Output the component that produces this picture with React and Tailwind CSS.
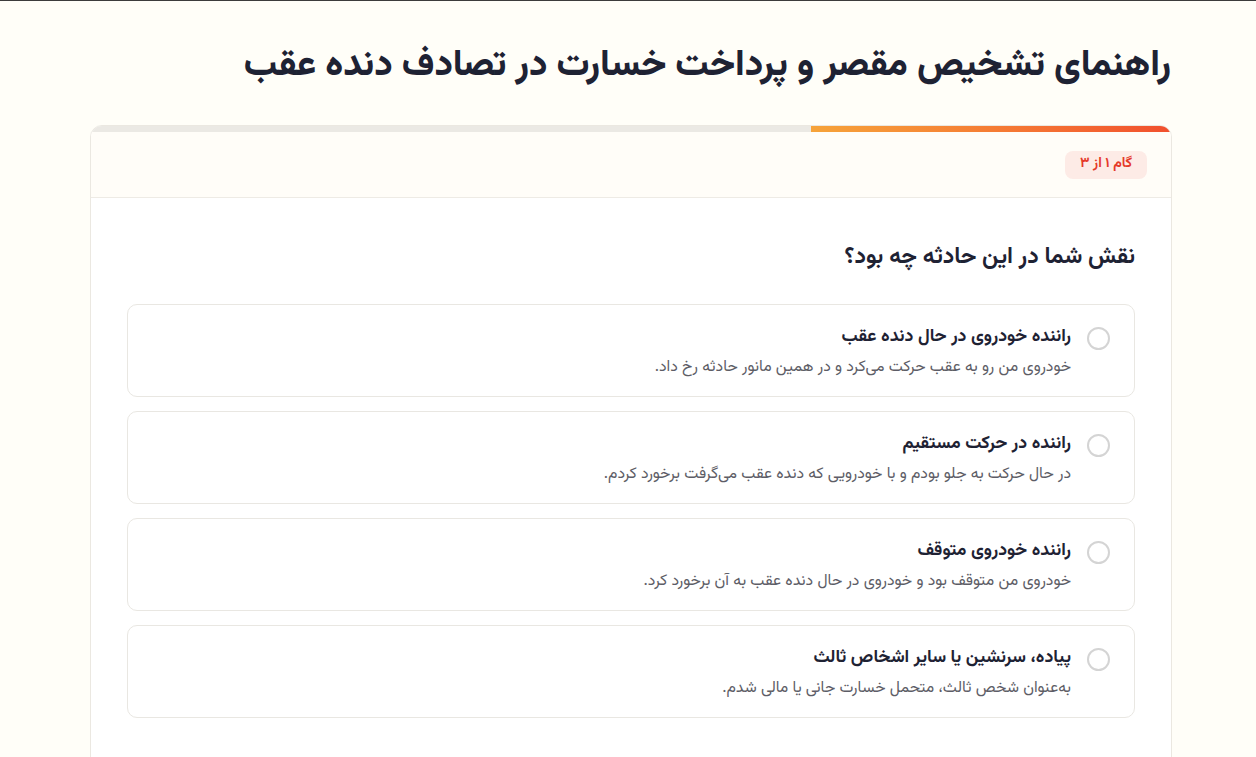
import React from "react";

const options = [
  {
    title: "راننده خودروی در حال دنده عقب",
    desc: "خودروی من رو به عقب حرکت می‌کرد و در همین مانور حادثه رخ داد.",
  },
  {
    title: "راننده در حرکت مستقیم",
    desc: "در حال حرکت به جلو بودم و با خودرویی که دنده عقب می‌گرفت برخورد کردم.",
  },
  {
    title: "راننده خودروی متوقف",
    desc: "خودروی من متوقف بود و خودروی در حال دنده عقب به آن برخورد کرد.",
  },
  {
    title: "پیاده، سرنشین یا سایر اشخاص ثالث",
    desc: "به‌عنوان شخص ثالث، متحمل خسارت جانی یا مالی شدم.",
  },
];

export default function App() {
  return (
    <div
      dir="rtl"
      className="h-[757px] overflow-hidden bg-[#fffef8] border-t border-[#3c3c3c] pl-[90px] pr-[84px]"
      style={{ fontFamily: '"Vazirmatn", "Noto Sans Arabic", "DejaVu Sans", sans-serif' }}
    >
      <div className="w-full">
        <h1 className="pt-[42px] pb-[36px] pr-[1px] text-[36.7px] leading-[46px] font-extrabold text-[#1e2233]">
          راهنمای تشخیص مقصر و پرداخت خسارت در تصادف دنده عقب
        </h1>

        <div className="rounded-t-[12px] border border-[#ebe8e1] overflow-hidden bg-white">
          <div className="h-[6px] bg-[#ebe9e4] flex">
            <div className="w-1/3 h-full bg-gradient-to-l from-[#f14f2e] to-[#f6a33a]" />
          </div>
          <div className="h-[66px] bg-[#fffdf8] border-b border-[#eeebe5] flex items-center px-6">
            <span className="h-[28px] px-[15px] rounded-[8px] bg-[#fdebe6] text-[#e53a2a] text-[14px] font-bold flex items-center">
              گام ۱ از ۳
            </span>
          </div>
          <div className="px-9 pt-[43px] pb-10">
            <h2 className="text-[23px] leading-8 font-bold text-[#1e2233] mb-[31px]">
              نقش شما در این حادثه چه بود؟
            </h2>
            <div className="flex flex-col gap-[14px]">
              {options.map((o) => (
                <div
                  key={o.title}
                  className="h-[93px] rounded-[10px] border border-[#e9e7e2] bg-white flex items-start gap-4 px-6 pt-[20px]"
                >
                  <span className="mt-[2px] w-[23px] h-[23px] shrink-0 rounded-full border-2 border-[#d4d4d4] bg-white" />
                  <div>
                    <div className="text-[17.8px] leading-6 font-bold text-[#1e2233]">{o.title}</div>
                    <div className="mt-[6px] text-[15.8px] leading-6 text-[#5d5d66]">{o.desc}</div>
                  </div>
                </div>
              ))}
            </div>
          </div>
        </div>
      </div>
    </div>
  );
}
